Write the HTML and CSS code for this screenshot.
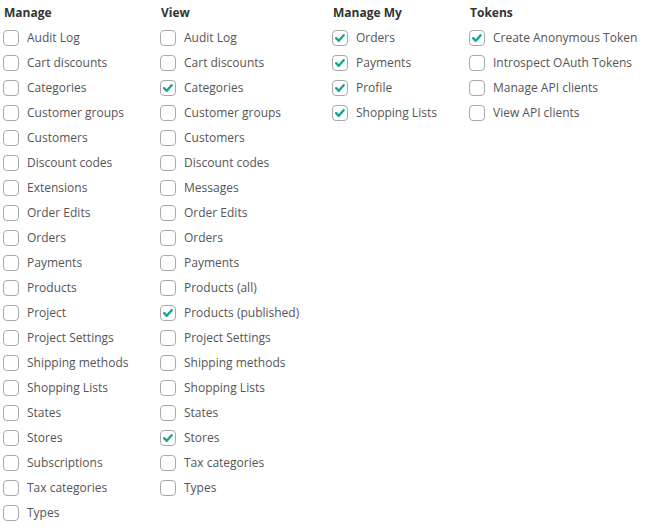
FILE: index.html
```html
<!DOCTYPE html>
<html>
<head>
    <title>Permissions</title>
    <link rel="stylesheet" href="styles.css">
</head>
<body>
    <div class="perm-grid">
        <div class="perm-col col-manage">
            <h4>Manage</h4>
            <label class="perm"><span class="box"></span>Audit Log</label>
            <label class="perm"><span class="box"></span>Cart discounts</label>
            <label class="perm"><span class="box"></span>Categories</label>
            <label class="perm"><span class="box"></span>Customer groups</label>
            <label class="perm"><span class="box"></span>Customers</label>
            <label class="perm"><span class="box"></span>Discount codes</label>
            <label class="perm"><span class="box"></span>Extensions</label>
            <label class="perm"><span class="box"></span>Order Edits</label>
            <label class="perm"><span class="box"></span>Orders</label>
            <label class="perm"><span class="box"></span>Payments</label>
            <label class="perm"><span class="box"></span>Products</label>
            <label class="perm"><span class="box"></span>Project</label>
            <label class="perm"><span class="box"></span>Project Settings</label>
            <label class="perm"><span class="box"></span>Shipping methods</label>
            <label class="perm"><span class="box"></span>Shopping Lists</label>
            <label class="perm"><span class="box"></span>States</label>
            <label class="perm"><span class="box"></span>Stores</label>
            <label class="perm"><span class="box"></span>Subscriptions</label>
            <label class="perm"><span class="box"></span>Tax categories</label>
            <label class="perm"><span class="box"></span>Types</label>
        </div>

        <div class="perm-col col-view">
            <h4>View</h4>
            <label class="perm"><span class="box"></span>Audit Log</label>
            <label class="perm"><span class="box"></span>Cart discounts</label>
            <label class="perm"><span class="box checked"><svg viewBox="0 0 16 16"><path d="M3.6 8.2l3 3 5.6-6.4"/></svg></span>Categories</label>
            <label class="perm"><span class="box"></span>Customer groups</label>
            <label class="perm"><span class="box"></span>Customers</label>
            <label class="perm"><span class="box"></span>Discount codes</label>
            <label class="perm"><span class="box"></span>Messages</label>
            <label class="perm"><span class="box"></span>Order Edits</label>
            <label class="perm"><span class="box"></span>Orders</label>
            <label class="perm"><span class="box"></span>Payments</label>
            <label class="perm"><span class="box"></span>Products (all)</label>
            <label class="perm"><span class="box checked"><svg viewBox="0 0 16 16"><path d="M3.6 8.2l3 3 5.6-6.4"/></svg></span>Products (published)</label>
            <label class="perm"><span class="box"></span>Project Settings</label>
            <label class="perm"><span class="box"></span>Shipping methods</label>
            <label class="perm"><span class="box"></span>Shopping Lists</label>
            <label class="perm"><span class="box"></span>States</label>
            <label class="perm"><span class="box checked"><svg viewBox="0 0 16 16"><path d="M3.6 8.2l3 3 5.6-6.4"/></svg></span>Stores</label>
            <label class="perm"><span class="box"></span>Tax categories</label>
            <label class="perm"><span class="box"></span>Types</label>
        </div>

        <div class="perm-col col-my">
            <h4>Manage My</h4>
            <label class="perm"><span class="box checked"><svg viewBox="0 0 16 16"><path d="M3.6 8.2l3 3 5.6-6.4"/></svg></span>Orders</label>
            <label class="perm"><span class="box checked"><svg viewBox="0 0 16 16"><path d="M3.6 8.2l3 3 5.6-6.4"/></svg></span>Payments</label>
            <label class="perm"><span class="box checked"><svg viewBox="0 0 16 16"><path d="M3.6 8.2l3 3 5.6-6.4"/></svg></span>Profile</label>
            <label class="perm"><span class="box checked"><svg viewBox="0 0 16 16"><path d="M3.6 8.2l3 3 5.6-6.4"/></svg></span>Shopping Lists</label>
        </div>

        <div class="perm-col col-tokens">
            <h4>Tokens</h4>
            <label class="perm"><span class="box checked"><svg viewBox="0 0 16 16"><path d="M3.6 8.2l3 3 5.6-6.4"/></svg></span>Create Anonymous Token</label>
            <label class="perm"><span class="box"></span>Introspect OAuth Tokens</label>
            <label class="perm"><span class="box"></span>Manage API clients</label>
            <label class="perm"><span class="box"></span>View API clients</label>
        </div>
    </div>
</body>
</html>
```

FILE: styles.css
```css
body {
    margin: 0;
    padding: 0 0 0 3px;
    background: #fff;
    font-family: "Open Sans", Arial, sans-serif;
    font-size: 12px;
    color: #555;
}
.perm-grid {
    display: flex;
    align-items: flex-start;
}
.perm-col {
    display: flex;
    flex-direction: column;
}
.col-manage { width: 157px; }
.col-view { width: 172px; }
.col-my { width: 137px; }
.col-tokens { width: 180px; }
.perm-col h4 {
    margin: 0;
    height: 25px;
    line-height: 26px;
    padding-left: 1px;
    font-size: 12px;
    font-weight: 700;
    color: #333;
}
.perm {
    display: flex;
    align-items: center;
    height: 25px;
    white-space: nowrap;
}
.box {
    box-sizing: border-box;
    width: 16px;
    height: 16px;
    margin-right: 8px;
    border: 1px solid #a9a9a9;
    border-radius: 4px;
    background: #fff;
    flex: none;
    display: flex;
}
.box svg {
    width: 14px;
    height: 14px;
}
.box svg path {
    fill: none;
    stroke: #14a88f;
    stroke-width: 2.8;
    stroke-linecap: round;
    stroke-linejoin: round;
}
```
